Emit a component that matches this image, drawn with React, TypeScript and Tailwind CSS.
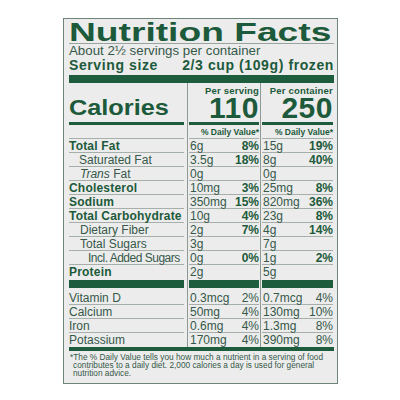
const green = "text-[#1d5a3b]";
const body = "text-[#36594a]";

function Line({
  c1,
  c2,
  c3,
  line = true,
}: {
  c1: React.ReactNode;
  c2?: React.ReactNode;
  c3?: React.ReactNode;
  line?: boolean;
}) {
  const cell = `h-[14px] flex items-center justify-between leading-none ${line ? "border-b border-[#a7afab]" : ""}`;
  return (
    <div className="grid grid-cols-[118px_73px_73px]">
      <div className="pr-[3px]">
        <div className={cell}>{c1}</div>
      </div>
      <div className="border-l border-[#8f9a95] pl-[1px] pr-[1px]">
        <div className={cell}>{c2}</div>
      </div>
      <div className="border-l border-[#8f9a95] pl-[1px]">
        <div className={cell}>{c3}</div>
      </div>
    </div>
  );
}

function Val({ v, p, bold = true }: { v: string; p?: string; bold?: boolean }) {
  return (
    <>
      <span className={`pl-[1px] text-[12px] ${body}`}>{v}</span>
      {p && (
        <span className={`text-[12px] ${bold ? `font-bold ${green}` : body}`}>{p}</span>
      )}
    </>
  );
}

const nutrients = [
  { name: "Total Fat", main: true, a: "6g", ap: "8%", b: "15g", bp: "19%" },
  { name: "Saturated Fat", pad: "pl-[10px]", a: "3.5g", ap: "18%", b: "8g", bp: "40%" },
  { name: "Trans Fat", pad: "pl-[11px]", trans: true, a: "0g", b: "0g" },
  { name: "Cholesterol", main: true, a: "10mg", ap: "3%", b: "25mg", bp: "8%" },
  { name: "Sodium", main: true, a: "350mg", ap: "15%", b: "820mg", bp: "36%" },
  { name: "Total Carbohydrate", main: true, a: "10g", ap: "4%", b: "23g", bp: "8%" },
  { name: "Dietary Fiber", pad: "pl-[11px]", a: "2g", ap: "7%", b: "4g", bp: "14%" },
  { name: "Total Sugars", pad: "pl-[11px]", a: "3g", b: "7g" },
  {
    name: "Incl. Added Sugars",
    pad: "pl-[19px] tracking-[-0.5px]",
    a: "0g",
    ap: "0%",
    b: "1g",
    bp: "2%",
  },
  { name: "Protein", main: true, a: "2g", b: "5g" },
];

const vitamins = [
  { name: "Vitamin D", a: "0.3mcg", ap: "2%", b: "0.7mcg", bp: "4%" },
  { name: "Calcium", a: "50mg", ap: "4%", b: "130mg", bp: "10%" },
  { name: "Iron", a: "0.6mg", ap: "4%", b: "1.3mg", bp: "8%" },
  { name: "Potassium", a: "170mg", ap: "4%", b: "390mg", bp: "8%" },
];

export default function App() {
  return (
    <div className="w-[400px] h-[400px] bg-white pt-[18px] pl-[63px] font-['Liberation_Sans',Arial,sans-serif]">
      <div className="w-[275px] border border-[#6f8479] bg-[#ececec] pl-[5px] pr-[3px] pb-[6px]">
        {/* header */}
        <div className="h-[25px] border-b border-[#9aa49f] leading-[27px] whitespace-nowrap">
          <span className={`inline-block origin-left scale-x-[1.43] text-[26px] font-bold ${green}`}>
            Nutrition Facts
          </span>
        </div>
        <div className={`h-[14px] leading-[14px] text-[13.3px] ${body}`}>
          About 2½ servings per container
        </div>
        <div
          className={`h-[14px] leading-[14px] text-[14px] font-bold tracking-[0.6px] flex justify-between ${green}`}
        >
          <span>Serving size</span>
          <span>2/3 cup (109g) frozen</span>
        </div>
        <div className="mt-[3px] h-[8px] bg-[#1d5c3d]" />

        {/* calories */}
        <div className="grid grid-cols-[118px_73px_73px] h-[43px]">
          <div className="pr-[3px] flex flex-col justify-end">
            <div className="leading-[22px] whitespace-nowrap">
              <span className={`inline-block origin-left scale-x-[1.15] text-[22px] font-bold ${green}`}>
                Calories
              </span>
            </div>
            <div className="mt-[1px] mb-[1px] h-[3px] bg-[#1d5c3d]" />
          </div>
          <div className="border-l border-[#8f9a95] pl-[1px] pr-[1px] pt-[3px]">
            <div className={`text-right text-[9.5px] font-bold leading-[9px] tracking-[0.2px] ${green}`}>
              Per serving
            </div>
            <div className={`text-right text-[30px] font-bold leading-[26px] tracking-[0.5px] ${green}`}>
              110
            </div>
            <div className="mt-[1px] h-[3px] bg-[#1d5c3d]" />
          </div>
          <div className="border-l border-[#8f9a95] pl-[1px] pt-[3px]">
            <div className={`text-right text-[9.5px] font-bold leading-[9px] tracking-[0.2px] ${green}`}>
              Per container
            </div>
            <div className={`text-right text-[30px] font-bold leading-[26px] tracking-[0.5px] ${green}`}>
              250
            </div>
            <div className="mt-[1px] h-[3px] bg-[#1d5c3d]" />
          </div>
        </div>

        <div className="grid grid-cols-[118px_73px_73px]">
          <div className="pr-[3px]">
            <div className="h-[13px] border-b border-[#a7afab]" />
          </div>
          <div className="border-l border-[#8f9a95] pl-[1px] pr-[1px]">
            <div
              className={`h-[13px] border-b border-[#a7afab] flex items-center justify-end text-[8.5px] font-bold ${green}`}
            >
              % Daily Value*
            </div>
          </div>
          <div className="border-l border-[#8f9a95] pl-[1px]">
            <div
              className={`h-[13px] border-b border-[#a7afab] flex items-center justify-end text-[8.5px] font-bold ${green}`}
            >
              % Daily Value*
            </div>
          </div>
        </div>

        {/* nutrients */}
        {nutrients.map((n, i) => (
          <Line
            key={n.name}
            line={i < nutrients.length - 1}
            c1={
              n.main ? (
                <span className={`text-[12px] font-bold tracking-[0.2px] whitespace-nowrap ${green}`}>
                  {n.name}
                </span>
              ) : (
                <span className={`text-[12px] whitespace-nowrap ${n.pad} ${body}`}>
                  {n.trans ? (
                    <>
                      <i>Trans</i> Fat
                    </>
                  ) : (
                    n.name
                  )}
                </span>
              )
            }
            c2={<Val v={n.a} p={n.ap} />}
            c3={<Val v={n.b} p={n.bp} />}
          />
        ))}

        <div className="grid grid-cols-[118px_73px_73px] h-[12px]">
          <div className="pr-[3px] pt-[1px]">
            <div className="h-[8px] bg-[#1d5c3d]" />
          </div>
          <div className="border-l border-[#8f9a95] pl-[1px] pr-[1px] pt-[1px]">
            <div className="h-[8px] bg-[#1d5c3d]" />
          </div>
          <div className="border-l border-[#8f9a95] pl-[1px] pt-[1px]">
            <div className="h-[8px] bg-[#1d5c3d]" />
          </div>
        </div>

        {vitamins.map((v, i) => (
          <Line
            key={v.name}
            line={i < vitamins.length - 1}
            c1={<span className={`text-[12px] ${body}`}>{v.name}</span>}
            c2={<Val v={v.a} p={v.ap} bold={false} />}
            c3={<Val v={v.b} p={v.bp} bold={false} />}
          />
        ))}

        <div className="h-[4px] bg-[#1d5c3d]" />
        <div className={`pt-[3px] pl-[4px] -indent-[3px] text-[8.3px] leading-[7.8px] ${body}`}>
          *The % Daily Value tells you how much a nutrient in a serving of food
          <br />
          contributes to a daily diet. 2,000 calories a day is used for general
          <br />
          nutrition advice.
        </div>
      </div>
    </div>
  );
}
